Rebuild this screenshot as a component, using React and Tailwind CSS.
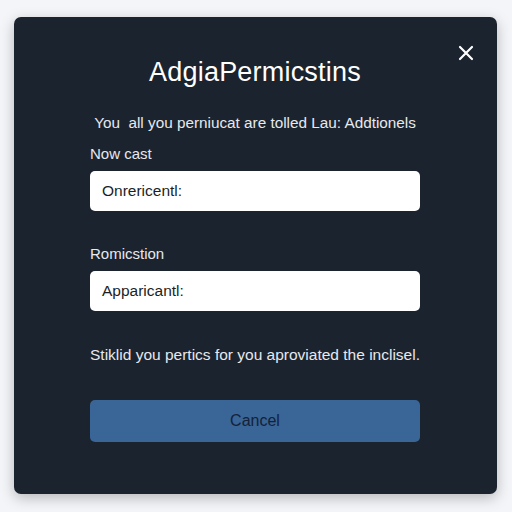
import React from "react";

export default function App() {
  return (
    <div className="w-[512px] h-[512px] bg-[#f3f5f8] pl-[14px] pt-[17px] overflow-hidden" style={{ fontFamily: '"Liberation Sans", Arial, sans-serif' }}>
      <div className="relative w-[483px] h-[477px] bg-[#1b232e] rounded-[7px] shadow-[0_4px_14px_rgba(0,0,0,0.25)] px-[76px] pr-[77px] pt-[39px] flex flex-col">
        <button className="absolute top-[28px] right-[23px] text-white">
          <svg width="16" height="16" viewBox="0 0 16 16" fill="none" stroke="currentColor" strokeWidth="2.2" strokeLinecap="round">
            <path d="M2 2 L14 14 M14 2 L2 14" />
          </svg>
        </button>
        <h1 className="text-center text-white text-[27px] leading-[32px] font-medium tracking-[0.2px]">AdgiaPermicstins</h1>
        <p className="mt-[25px] text-center text-[#e6e9ee] text-[15.3px] leading-[20px]">You &nbsp;all you perniucat are tolled Lau: Addtionels</p>
        <label className="mt-[11px] text-[#e6e9ee] text-[15px] leading-[20px]">Now cast</label>
        <div className="mt-[7px] h-[40px] bg-white rounded-[5px] flex items-center px-[12px] text-[#1b1f26] text-[15.5px]">Onrericentl:</div>
        <label className="mt-[33px] text-[#e6e9ee] text-[15px] leading-[20px]">Romicstion</label>
        <div className="mt-[7px] h-[40px] bg-white rounded-[5px] flex items-center px-[12px] text-[#1b1f26] text-[15.5px]">Apparicantl:</div>
        <p className="mt-[34px] text-[#e6e9ee] text-[15.5px] leading-[20px]">Stiklid you pertics for you aproviated the inclisel.</p>
        <button className="mt-[35px] h-[42px] bg-[#3a6597] rounded-[5px] text-[#142238] text-[16px]">Cancel</button>
      </div>
    </div>
  );
}
